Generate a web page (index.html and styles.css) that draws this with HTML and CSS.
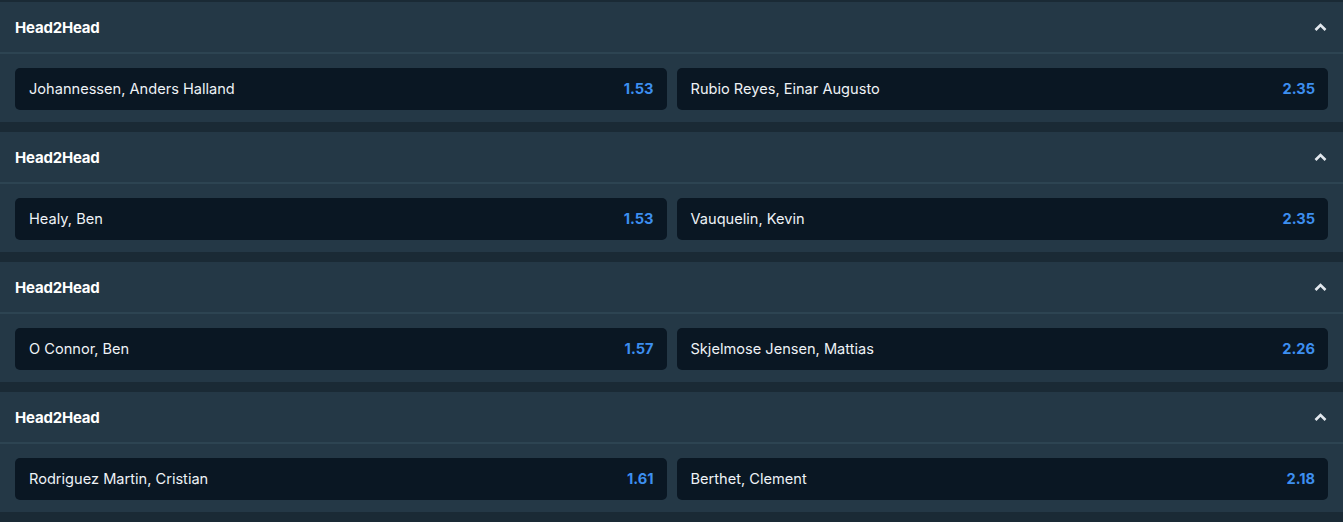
FILE: index.html
```html
<!DOCTYPE html>
<html lang="en">
<head>
<meta charset="utf-8">
<title>Head2Head</title>
<link rel="stylesheet" href="styles.css">
</head>
<body>
<main class="list">
  <section class="market">
    <header class="market-head">
      <h2 class="market-title">Head2Head</h2>
      <svg class="chev" width="13" height="8" viewBox="0 0 13 8"><path d="M1.5 7 L6.5 2 L11.5 7" fill="none" stroke="#e3e8ee" stroke-width="2.6"/></svg>
    </header>
    <div class="market-body">
      <button class="sel"><span class="name">Johannessen, Anders Halland</span><span class="odds">1.53</span></button>
      <button class="sel"><span class="name">Rubio Reyes, Einar Augusto</span><span class="odds">2.35</span></button>
    </div>
  </section>
  <section class="market">
    <header class="market-head">
      <h2 class="market-title">Head2Head</h2>
      <svg class="chev" width="13" height="8" viewBox="0 0 13 8"><path d="M1.5 7 L6.5 2 L11.5 7" fill="none" stroke="#e3e8ee" stroke-width="2.6"/></svg>
    </header>
    <div class="market-body">
      <button class="sel"><span class="name">Healy, Ben</span><span class="odds">1.53</span></button>
      <button class="sel"><span class="name">Vauquelin, Kevin</span><span class="odds">2.35</span></button>
    </div>
  </section>
  <section class="market">
    <header class="market-head">
      <h2 class="market-title">Head2Head</h2>
      <svg class="chev" width="13" height="8" viewBox="0 0 13 8"><path d="M1.5 7 L6.5 2 L11.5 7" fill="none" stroke="#e3e8ee" stroke-width="2.6"/></svg>
    </header>
    <div class="market-body">
      <button class="sel"><span class="name">O Connor, Ben</span><span class="odds">1.57</span></button>
      <button class="sel"><span class="name">Skjelmose Jensen, Mattias</span><span class="odds">2.26</span></button>
    </div>
  </section>
  <section class="market">
    <header class="market-head">
      <h2 class="market-title">Head2Head</h2>
      <svg class="chev" width="13" height="8" viewBox="0 0 13 8"><path d="M1.5 7 L6.5 2 L11.5 7" fill="none" stroke="#e3e8ee" stroke-width="2.6"/></svg>
    </header>
    <div class="market-body">
      <button class="sel"><span class="name">Rodriguez Martin, Cristian</span><span class="odds">1.61</span></button>
      <button class="sel"><span class="name">Berthet, Clement</span><span class="odds">2.18</span></button>
    </div>
  </section>
</main>
</body>
</html>
```

FILE: styles.css
```css
* { box-sizing: border-box; }
html, body { margin: 0; padding: 0; }
body {
  background: #1a2a35;
  font-family: Inter, "Noto Sans", "Liberation Sans", sans-serif;
  color: #eef2f6;
}
.list {
  display: flex;
  flex-direction: column;
  gap: 10px;
  padding-top: 2px;
}
.market {
  background: #243846;
}
.market-head {
  height: 52px;
  display: flex;
  align-items: center;
  justify-content: space-between;
  padding: 0 16px 0 15px;
  border-bottom: 2px solid #2d4452;
}
.market-title {
  margin: 0;
  font-size: 15px;
  font-weight: 700;
  letter-spacing: -0.2px;
  color: #ffffff;
}
.chev { display: block; }
.market-body {
  display: grid;
  grid-template-columns: 1fr 1fr;
  gap: 10px;
  padding: 14px 15px 12px 15px;
}
.sel {
  height: 42px;
  border: 0;
  border-radius: 5px;
  background: #0a1723;
  display: flex;
  align-items: center;
  justify-content: space-between;
  padding: 0 13px 0 14px;
  font-family: inherit;
  color: #eef2f6;
  cursor: pointer;
}
.name {
  font-size: 14.6px;
  font-weight: 400;
}
.odds {
  font-size: 14.6px;
  font-weight: 700;
  color: #3d8ff0;
}
```
